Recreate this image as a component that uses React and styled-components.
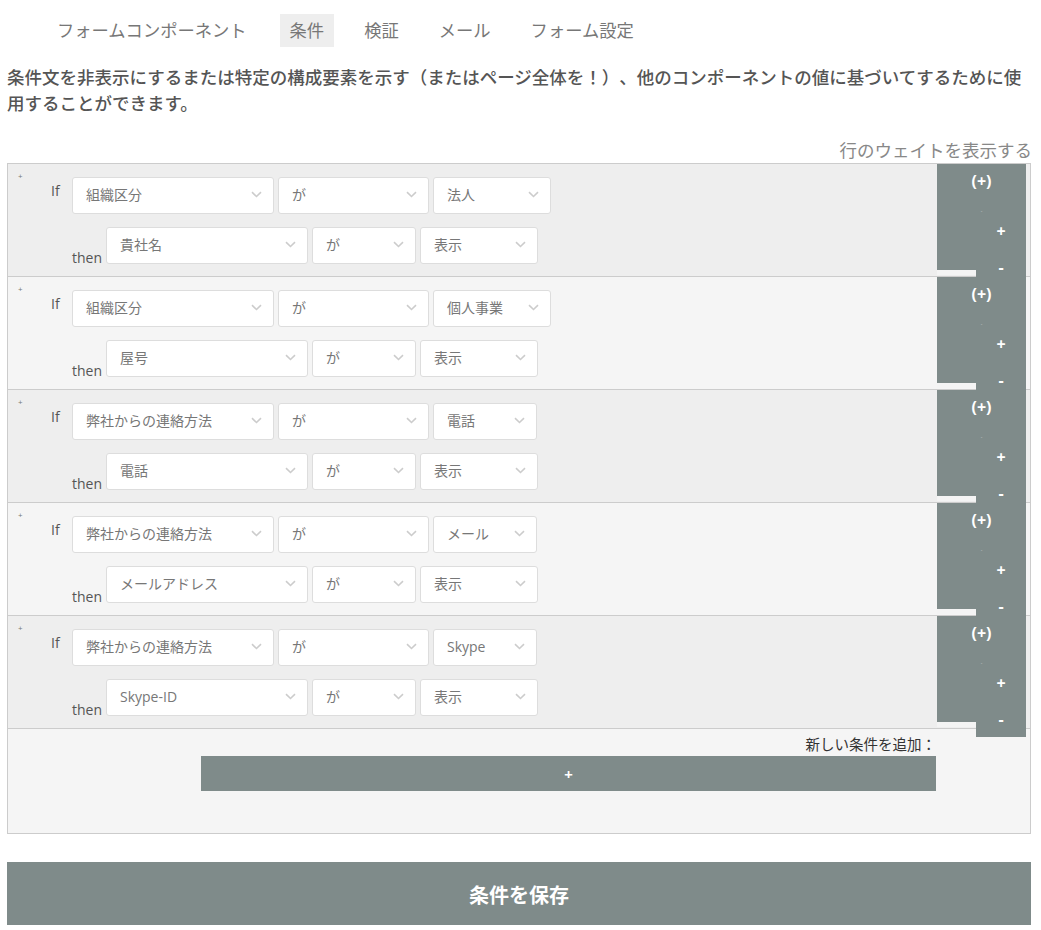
import React from "react";
import styled, { createGlobalStyle } from "styled-components";

const GRAY = "#7f8b8a";

const Global = createGlobalStyle`
  html, body { margin: 0; padding: 0; background: #fff; }
  body {
    font-family: "Open Sans", "Noto Sans CJK JP", sans-serif;
    text-spacing-trim: space-all;
  }
`;

const Page = styled.div`
  padding: 14px 10px 5px 7px;
`;

const Nav = styled.nav`
  display: flex;
  gap: 20px;
  padding-left: 40px;
`;

const Tab = styled.div`
  height: 33px;
  line-height: 33px;
  padding: 0 10px;
  font-size: 17.3px;
  color: #777;
  background: ${(p) => (p.$active ? "#eee" : "transparent")};
  &:first-child { margin-right: 3px; }
`;

const Intro = styled.p`
  margin: 17px 0 21px;
  font-size: 17.5px;
  line-height: 26px;
  font-weight: 500;
  color: #555;
  text-spacing-trim: space-all;
`;

const WeightToggle = styled.div`
  text-align: right;
  font-size: 17.5px;
  line-height: 26px;
  color: #888;
  margin-right: -1px;
`;

const Box = styled.div`
  border: 1px solid #ccc;
  background: #f5f5f5;
`;

const Row = styled.div`
  display: flex;
  align-items: flex-start;
  height: 112px;
  padding-right: 4px;
  border-bottom: 1px solid #ccc;
  background: ${(p) => (p.$odd ? "#eee" : "#f5f5f5")};
`;

const Marker = styled.div`
  width: 33px;
  padding-left: 10px;
  margin-top: 8px;
  font-size: 8px;
  line-height: 8px;
  color: #777;
`;

const Lines = styled.div`
  flex: 1;
  display: flex;
  flex-direction: column;
  gap: 13px;
  padding-top: 13px;
`;

const Line = styled.div`
  display: flex;
  gap: 4px;
  margin-left: ${(p) => (p.$then ? "21px" : "0")};
`;

const Label = styled.span`
  width: ${(p) => (p.$then ? "30px" : "17px")};
  font-size: 14px;
  color: #555;
  line-height: 18px;
  align-self: ${(p) => (p.$then ? "flex-end" : "flex-start")};
  margin-top: ${(p) => (p.$then ? "0" : "5px")};
  margin-bottom: ${(p) => (p.$then ? "-3px" : "0")};
`;

const Select = styled.div`
  box-sizing: border-box;
  width: ${(p) => p.$w}px;
  height: 37px;
  display: flex;
  align-items: center;
  justify-content: space-between;
  padding: 0 11px 2px 13px;
  background: #fff;
  border: 1px solid #ddd;
  border-radius: 3px;
  font-size: 14px;
  line-height: 18px;
  color: #777;
`;

const Panel = styled.div`
  width: 89px;
  height: 106px;
  flex-shrink: 0;
  background: ${GRAY};
  color: #fff;
  font-weight: 700;
  font-size: 16px;
`;

const PanelHead = styled.div`
  height: 34px;
  display: flex;
  align-items: center;
  justify-content: center;
`;

const Weight = styled.div`
  height: 15px;
  box-sizing: border-box;
  padding-top: 11px;
  text-align: center;
  font-size: 5px;
  line-height: 5px;
  font-weight: 400;
  color: #c9cfce;
`;

const BtnRow = styled.div`
  display: flex;
  justify-content: flex-end;
  align-items: flex-start;
`;

const Bar = styled.div`
  width: 39px;
  height: 5px;
  margin-top: 21px;
  background: #f4f4f4;
`;

const SmallBtn = styled.div`
  width: 50px;
  height: 36px;
  display: flex;
  align-items: center;
  justify-content: center;
  background: ${GRAY};
  color: #fff;
`;

const Footer = styled.div`
  padding: 7px 94px 42px 193px;
`;

const AddLabel = styled.div`
  text-align: right;
  font-size: 14.5px;
  line-height: 18px;
  color: #333;
  margin-bottom: 2px;
`;

const AddBtn = styled.div`
  height: 35px;
  display: flex;
  align-items: center;
  justify-content: center;
  background: ${GRAY};
  color: #fff;
  font-weight: 700;
  font-size: 15px;
`;

const SaveBtn = styled.div`
  margin-top: 28px;
  height: 63px;
  display: flex;
  align-items: center;
  justify-content: center;
  padding-top: 1px;
  box-sizing: border-box;
  background: ${GRAY};
  color: #fff;
  font-weight: 700;
  font-size: 20px;
`;

const Chevron = () => (
  <svg width="11" height="7" viewBox="0 0 11 7">
    <polyline points="1,1.2 5.5,5.5 10,1.2" fill="none" stroke="#ccc" strokeWidth="1.6" />
  </svg>
);

const Sel = ({ w, children }) => (
  <Select $w={w}>
    <span>{children}</span>
    <Chevron />
  </Select>
);

const rules = [
  { field: "組織区分", value: "法人", vw: 118, target: "貴社名" },
  { field: "組織区分", value: "個人事業", vw: 118, target: "屋号" },
  { field: "弊社からの連絡方法", value: "電話", vw: 104, target: "電話" },
  { field: "弊社からの連絡方法", value: "メール", vw: 104, target: "メールアドレス" },
  { field: "弊社からの連絡方法", value: "Skype", vw: 104, target: "Skype-ID" },
];

const tabs = ["フォームコンポーネント", "条件", "検証", "メール", "フォーム設定"];

export default function App() {
  return (
    <>
      <Global />
      <Page>
        <Nav>
          {tabs.map((t) => (
            <Tab key={t} $active={t === "条件"}>{t}</Tab>
          ))}
        </Nav>
        <Intro>
          条件文を非表示にするまたは特定の構成要素を示す（またはページ全体を！）、他のコンポーネントの値に基づいてするために使用することができます。
        </Intro>
        <WeightToggle>行のウェイトを表示する</WeightToggle>
        <Box>
          {rules.map((r, i) => (
            <Row key={i} $odd={i % 2 === 0}>
              <Marker>+</Marker>
              <Lines>
                <Line>
                  <Label>If</Label>
                  <Sel w={202}>{r.field}</Sel>
                  <Sel w={151}>が</Sel>
                  <Sel w={r.vw}>{r.value}</Sel>
                </Line>
                <Line $then>
                  <Label $then>then</Label>
                  <Sel w={202}>{r.target}</Sel>
                  <Sel w={104}>が</Sel>
                  <Sel w={118}>表示</Sel>
                </Line>
              </Lines>
              <Panel>
                <PanelHead>(+)</PanelHead>
                <Weight>-</Weight>
                <BtnRow>
                  <SmallBtn>+</SmallBtn>
                </BtnRow>
                <BtnRow>
                  <Bar />
                  <SmallBtn>-</SmallBtn>
                </BtnRow>
              </Panel>
            </Row>
          ))}
          <Footer>
            <AddLabel>新しい条件を追加：</AddLabel>
            <AddBtn>+</AddBtn>
          </Footer>
        </Box>
        <SaveBtn>条件を保存</SaveBtn>
      </Page>
    </>
  );
}
